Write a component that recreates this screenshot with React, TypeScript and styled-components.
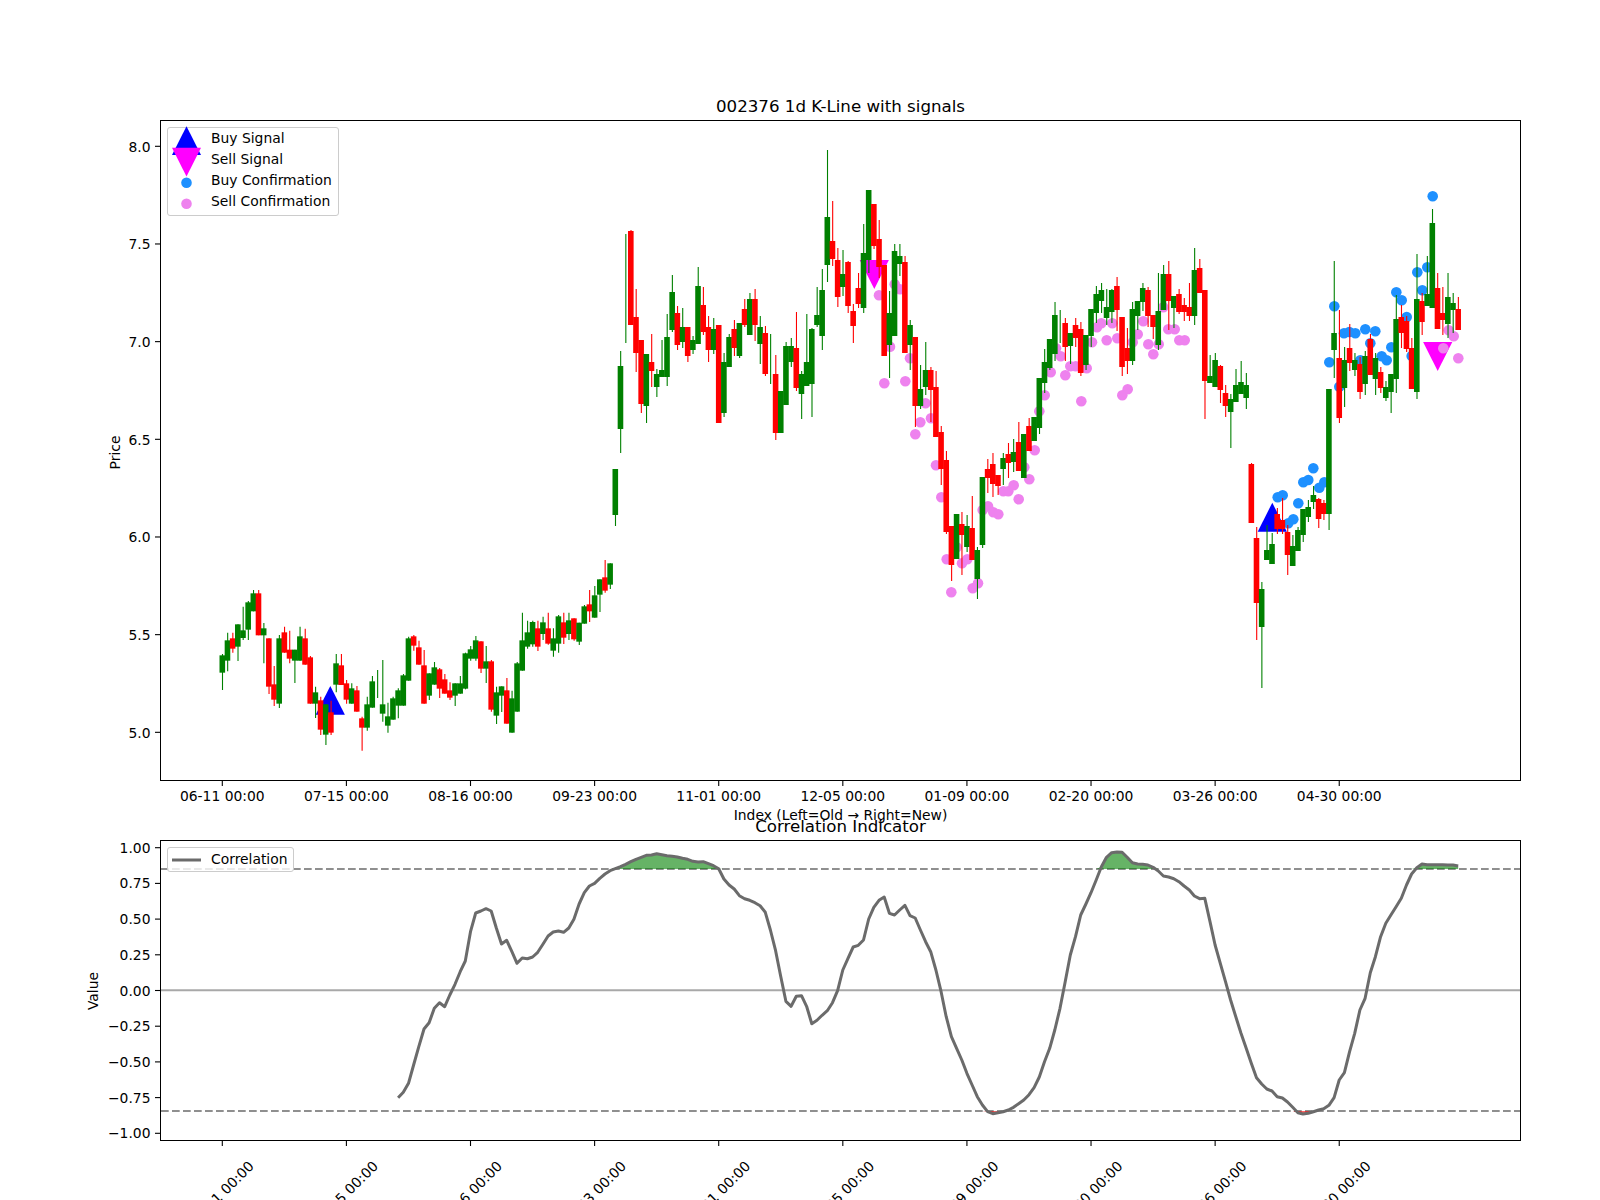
import React from 'react';
import styled, { createGlobalStyle } from 'styled-components';

const GlobalStyle = createGlobalStyle`
	html, body {
		margin: 0;
		background: #fff;
	}
`;

const Figure = styled.div`
	box-sizing: border-box;
	width: 1600px;
	height: 1200px;
	padding: 97px 79px 0 160px;
	overflow: hidden;
	display: flex;
	flex-direction: column;
	background: #fff;
	color: #000;
	font-family: 'DejaVu Sans', sans-serif;
`;
const PlotTitle = styled.div<{ $overlap?: number }>`
	height: 20px;
	line-height: 20px;
	margin-top: ${(props) => (props.$overlap ? `-${props.$overlap}px` : '0')};
	margin-bottom: 3px;
	font-size: 16.67px;
	text-align: center;
`;
const XLabel = styled.div`
	height: 16px;
	line-height: 16px;
	margin-top: 26px;
	font-size: 13.89px;
	text-align: center;
`;
const Axes = styled.div<{ $height: number }>`
	box-sizing: border-box;
	position: relative;
	flex: none;
	width: 1361px;
	height: ${(props) => props.$height}px;
	border: 1px solid #000;
`;
const Plot = styled.svg`
	display: block;
	width: 100%;
	height: 100%;
	overflow: visible;
`;
const Legend = styled.div<{ $width: number; $padding: string }>`
	box-sizing: border-box;
	position: absolute;
	left: 6px;
	top: 6px;
	width: ${(props) => props.$width}px;
	padding: ${(props) => props.$padding};
	display: flex;
	flex-direction: column;
	background: rgba(255, 255, 255, 0.8);
	border: 1px solid #ccc;
	border-radius: 3px;
`;
const LegendRow = styled.div`
	height: 21px;
	display: flex;
	align-items: center;
	gap: 10px;
	font-size: 13.89px;
	white-space: nowrap;
`;
const LegendText = styled.span`
	margin-top: -2px;
`;
const LegendGlyph = styled.svg`
	flex: none;
	width: 29px;
	height: 21px;
	overflow: visible;
`;
const TickLabel = styled.text<{ $anchor?: string }>`
	font-size: 13.89px;
	text-anchor: ${(props) => props.$anchor || 'middle'};
	fill: #000;
`;
const AxisName = styled.text`
	font-size: 13.89px;
	text-anchor: middle;
	fill: #000;
`;

const G = 'green';
const R = 'red';
type Bar = (string | number)[];

// first 76 bars were read off the 3x crop, so they go through a conversion
const early: Bar[] = ([
	[G, 466, 518, 462, 570], [G, 421, 482, 398, 514], [R, 415, 446, 398, 458], [G, 373, 440, 373, 483],
	[G, 391, 414, 320, 420], [G, 307, 389, 303, 420], [G, 280, 334, 270, 334], [R, 280, 406, 270, 406],
	[G, 385, 406, 369, 490], [R, 415, 560, 415, 582], [R, 553, 599, 498, 618], [G, 415, 611, 405, 624],
	[R, 397, 458, 380, 458], [R, 449, 476, 392, 490], [G, 449, 482, 449, 549], [G, 409, 482, 380, 482],
	[R, 415, 494, 386, 494], [R, 472, 611, 468, 611], [G, 577, 611, 560, 654], [R, 601, 689, 590, 705],
	[G, 613, 704, 613, 735], [R, 637, 698, 602, 705], [G, 490, 554, 462, 577], [R, 496, 555, 462, 555],
	[R, 550, 599, 540, 611], [G, 565, 611, 550, 611], [R, 571, 635, 558, 635], [R, 655, 683, 650, 752],
	[G, 613, 683, 590, 692], [G, 544, 623, 528, 623], [G, 590, 590, 510, 594], [G, 613, 641, 480, 665],
	[G, 649, 677, 608, 698], [G, 595, 659, 590, 659], [G, 571, 617, 565, 655], [G, 526, 617, 522, 617],
	[G, 415, 542, 410, 542], [R, 409, 437, 405, 452], [R, 442, 494, 422, 494], [R, 496, 611, 450, 611],
	[G, 520, 587, 520, 600], [G, 502, 554, 486, 554], [R, 508, 566, 504, 594], [R, 538, 581, 522, 581],
	[R, 571, 593, 547, 600], [G, 550, 587, 550, 618], [G, 550, 581, 528, 581], [G, 460, 566, 458, 568],
	[G, 448, 476, 438, 482], [G, 421, 476, 408, 482], [R, 424, 506, 424, 519], [G, 484, 506, 438, 549],
	[R, 484, 629, 480, 635], [G, 577, 647, 560, 672], [G, 559, 587, 559, 636], [R, 571, 671, 534, 671],
	[G, 595, 698, 572, 698], [G, 490, 635, 486, 635], [G, 421, 512, 338, 512], [G, 397, 440, 362, 446],
	[G, 366, 433, 362, 440], [R, 385, 440, 362, 453], [G, 367, 402, 350, 420], [R, 385, 431, 338, 434],
	[G, 415, 452, 385, 470], [G, 349, 431, 345, 458], [R, 367, 413, 338, 432], [G, 361, 402, 338, 420],
	[R, 355, 418, 355, 422], [G, 368, 425, 368, 435], [G, 319, 371, 315, 371], [R, 313, 334, 270, 366],
	[G, 286, 353, 258, 353], [G, 238, 284, 238, 336], [R, 232, 272, 180, 278], [G, 190, 254, 190, 267],
] as Bar[]).map(([c, a, b, d, e]) => [c, 500 + (a as number) / 3, 500 + (b as number) / 3, 500 + (d as number) / 3, 500 + (e as number) / 3]);

const late: Bar[] = [
	[G, 469, 515, 469, 526], [G, 366, 429, 351, 453], [G, 300, 300, 234, 343], [R, 231, 325, 230, 325],
	[R, 317, 353, 289, 372], [R, 340, 404, 340, 413], [G, 354, 406, 354, 423], [R, 362, 371, 334, 387],
	[G, 374, 387, 369, 397], [G, 370, 377, 340, 377], [G, 337, 377, 314, 386], [G, 292, 330, 275, 332],
	[R, 313, 345, 306, 350], [G, 327, 342, 308, 348], [R, 327, 356, 327, 362], [G, 340, 350, 336, 354],
	[G, 286, 344, 267, 344], [R, 305, 332, 287, 335], [R, 327, 350, 316, 362], [G, 329, 350, 318, 354],
	[R, 325, 423, 325, 423], [G, 362, 413, 353, 417], [G, 337, 367, 334, 367], [R, 329, 348, 320, 356],
	[G, 323, 356, 323, 358], [R, 309, 325, 299, 327], [G, 299, 335, 293, 335], [R, 299, 325, 289, 341],
	[G, 327, 344, 316, 364], [R, 333, 374, 326, 376], [G, 350, 350, 334, 384], [R, 374, 433, 355, 440],
	[G, 391, 433, 391, 433], [G, 346, 405, 342, 405], [G, 346, 362, 338, 367], [R, 348, 388, 312, 391],
	[G, 374, 394, 371, 419], [G, 362, 386, 314, 386], [G, 329, 384, 328, 417], [G, 315, 325, 287, 327],
	[G, 290, 336, 269, 350], [G, 217, 265, 150, 282], [R, 241, 259, 201, 266], [R, 260, 297, 248, 307],
	[G, 274, 287, 250, 296], [R, 262, 306, 261, 313], [R, 311, 326, 304, 343], [R, 288, 304, 273, 308],
	[G, 253, 308, 224, 313], [G, 190, 260, 190, 273], [R, 204, 246, 204, 249], [R, 239, 267, 220, 278],
	[R, 265, 356, 265, 356], [G, 313, 345, 291, 378], [G, 251, 336, 244, 336], [G, 256, 264, 244, 276],
	[R, 262, 353, 256, 353], [G, 325, 345, 320, 370], [R, 337, 406, 337, 427], [G, 389, 406, 365, 409],
	[G, 370, 387, 342, 395], [R, 370, 390, 367, 422], [R, 387, 437, 371, 437], [R, 432, 469, 426, 485],
	[R, 460, 532, 451, 534], [R, 526, 565, 526, 581], [G, 514, 559, 514, 559], [R, 524, 535, 512, 575],
	[G, 526, 547, 515, 552], [R, 528, 560, 496, 560], [G, 550, 579, 547, 599], [G, 477, 545, 477, 548],
	[R, 469, 478, 459, 493], [R, 464, 484, 453, 497], [R, 475, 486, 475, 495], [G, 458, 469, 453, 485],
	[R, 454, 463, 443, 478], [G, 452, 462, 439, 472], [R, 442, 471, 422, 471], [G, 434, 478, 434, 478],
	[R, 426, 451, 418, 451], [G, 417, 441, 417, 441], [G, 378, 428, 378, 434], [G, 362, 383, 349, 393],
	[G, 339, 368, 339, 370], [G, 315, 354, 302, 361], [G, 325, 325, 310, 343], [R, 323, 347, 318, 361],
	[G, 333, 346, 333, 364], [R, 325, 338, 318, 347], [R, 329, 373, 322, 376], [G, 335, 365, 335, 370],
	[G, 309, 336, 309, 347], [G, 294, 313, 286, 323], [G, 290, 301, 283, 313], [G, 307, 318, 289, 325],
	[G, 290, 312, 289, 323], [R, 286, 310, 277, 331], [R, 317, 367, 317, 376], [R, 348, 361, 328, 374],
	[G, 309, 361, 302, 365], [G, 301, 316, 301, 330], [G, 288, 302, 283, 311], [R, 290, 316, 287, 327],
	[R, 315, 327, 315, 339], [G, 311, 345, 273, 350], [G, 274, 310, 265, 310], [R, 274, 301, 261, 330],
	[G, 296, 308, 296, 328], [R, 294, 312, 289, 314], [R, 305, 312, 298, 321], [R, 307, 316, 283, 321],
	[G, 270, 316, 248, 325], [R, 268, 293, 259, 293], [R, 290, 381, 290, 419], [G, 376, 383, 355, 383],
	[G, 360, 387, 353, 387], [R, 366, 390, 365, 403], [R, 393, 406, 385, 417], [G, 399, 412, 394, 448],
	[G, 385, 402, 369, 402], [G, 382, 394, 361, 394], [G, 385, 398, 373, 409], [R, 464, 523, 463, 523],
	[R, 538, 603, 527, 640], [G, 589, 627, 582, 688], [G, 550, 560, 525, 560], [G, 544, 564, 533, 564],
	[R, 514, 529, 508, 534], [R, 520, 529, 498, 534], [R, 532, 555, 525, 575], [G, 546, 566, 535, 566],
	[G, 530, 551, 527, 551], [G, 509, 535, 509, 542], [G, 507, 517, 500, 522], [G, 495, 502, 486, 509],
	[R, 499, 519, 498, 528], [R, 503, 514, 500, 520], [G, 389, 514, 389, 530], [G, 333, 350, 261, 378],
	[R, 358, 418, 310, 423], [G, 360, 388, 347, 407], [R, 348, 363, 324, 371], [G, 360, 370, 353, 376],
	[R, 364, 392, 357, 399], [G, 356, 384, 351, 395], [R, 339, 375, 334, 375], [G, 358, 379, 353, 395],
	[R, 372, 388, 367, 393], [G, 387, 398, 381, 401], [G, 374, 392, 374, 413], [G, 319, 379, 295, 393],
	[R, 317, 333, 305, 348], [R, 321, 349, 316, 352], [R, 348, 389, 338, 389], [G, 299, 392, 254, 399],
	[R, 301, 322, 293, 335], [G, 294, 306, 256, 306], [G, 223, 308, 209, 308], [R, 288, 329, 273, 329],
	[R, 313, 320, 287, 335], [G, 297, 324, 273, 338], [G, 303, 310, 293, 333], [R, 309, 330, 297, 330],
];

const bars = [...early, ...late];
const barX = (i: number) => 222.3 + 5.171 * i;

const buyDots = [
	[1432.7, 196.3], [1334.3, 306.3], [1344, 333.3], [1349.3, 332], [1355.3, 333.3], [1365.3, 329.3],
	[1375.3, 331.3], [1370.3, 343.3], [1329.3, 362.3], [1339.3, 386.7], [1360.3, 360.3], [1381.7, 356.3],
	[1386.7, 360.3], [1391.3, 347.3], [1396.3, 292.3], [1401.7, 300.3], [1406.7, 317], [1411.7, 356],
	[1417.3, 272.3], [1422.3, 290.3], [1427.3, 267.3], [1313.3, 468.3], [1277.7, 497.3], [1282.7, 495.3],
	[1298.3, 503.3], [1303.3, 482.3], [1308.3, 480], [1319.3, 487.7], [1324.3, 482.3], [1288.3, 523.3],
	[1293.3, 519.3],
];
const sellDots = [
	[879, 295.3], [894.7, 284.3], [900, 289.3], [890, 346.7], [910, 358.3], [884.3, 383.3], [905.3, 381.3],
	[925.5, 403.3], [920.3, 422.3], [931, 418.3], [915.3, 434.3], [936, 465.3], [941.3, 497.3], [946.7, 559.3],
	[956.7, 547.3], [951.3, 592.3], [962, 563.3], [967.3, 559.3], [972.7, 588.3], [978, 583.3], [982.7, 510],
	[988, 506.3], [993.3, 512.3], [998.3, 514.3], [1003.3, 491.3], [1008.3, 491.3], [1013.7, 485.3],
	[1018.7, 499.3], [1024.3, 467.3], [1029.3, 479.3], [1034.7, 450.3], [1039.3, 411.3], [1044.7, 395.3],
	[1050.7, 372.3], [1056, 348.3], [1060.7, 356.3], [1065.3, 375.3], [1070.3, 366.3], [1075.7, 366.3],
	[1081.3, 401.3], [1086.7, 368.3], [1092, 342.3], [1097, 327.3], [1101.3, 323.3], [1106.7, 340.3],
	[1112.3, 323.3], [1117.3, 338.3], [1122.3, 395.3], [1127.7, 389.3], [1132.7, 342.3], [1137.7, 334.3],
	[1143.3, 321.3], [1148.3, 344.3], [1153.3, 354.3], [1158.7, 344.3], [1163.3, 307.3], [1168.3, 329.3],
	[1174.7, 329.3], [1179.3, 340.3], [1184.7, 340.3], [1448.7, 330.3], [1453.7, 336.3], [1443.3, 348.3],
	[1458.3, 358.3],
];

const corr = [
	893, 877, 850, 795, 740, 687, 668, 625, 608, 620, 585, 553, 515, 483, 395, 339, 333, 326, 333, 385,
	432, 421, 455, 490, 474, 476, 471, 457, 433, 408, 396, 393, 397, 384, 358, 312, 278, 258, 250, 235,
	222, 212, 206, 200, 193, 185, 178, 172, 166, 165, 161, 164, 167, 169, 171, 175, 178, 184, 186, 185,
	191, 197, 206, 237, 255, 267, 287, 296, 301, 308, 317, 337, 390, 452, 530, 604, 619, 589, 587, 619,
	671, 661, 646, 632, 608, 572, 510, 475, 441, 436, 420, 357, 322, 301, 291, 340, 345, 330, 316, 347,
	354, 390, 425, 455, 510, 575, 650, 710, 745, 780, 820, 855, 890, 915, 935, 941, 938, 935, 930, 922,
	911, 900, 884, 863, 831, 785, 745, 690, 625, 545, 465, 410, 345, 312, 278, 240, 200, 172, 158, 156,
	157, 172, 188, 192, 193, 195, 202, 213, 228, 231, 236, 245, 258, 270, 288, 296, 295, 365, 435, 490,
	545, 600, 650, 700, 745, 790, 833, 852, 867, 873, 890, 894, 906, 922, 938, 942, 940, 935, 930, 926,
	916, 893, 840, 818, 755, 700, 630, 595, 518, 470, 410, 370, 345, 320, 295, 255, 222, 203, 192, 194,
	194, 194, 194, 195, 195, 198,
].map((z) => 800 + z / 3);

const corrX = (j: number) => barX(34 + j);
const UPPER = 868.9;
const LOWER = 1111;
const ZERO = 990.3;
const priceTicks = ['8.0', '7.5', '7.0', '6.5', '6.0', '5.5', '5.0'];
const valueTicks = [1, 0.75, 0.5, 0.25, 0, -0.25, -0.5, -0.75, -1];
const dates = ['06-11', '07-15', '08-16', '09-23', '11-01', '12-05', '01-09', '02-20', '03-26', '04-30'];

const linePoints = corr.map((y, j) => `${corrX(j).toFixed(1)},${y.toFixed(1)}`).join(' ');
const zonePoints = (base: number, clamp: (y: number) => number) =>
	`${corrX(0)},${base} ` +
	corr.map((y, j) => `${corrX(j).toFixed(1)},${clamp(y).toFixed(1)}`).join(' ') +
	` ${corrX(corr.length - 1)},${base}`;

function Triangle(props: { x: number; top: number; bottom: number; up: boolean; color: string }) {
	const { x, top, bottom, up, color } = props;
	const half = 14.6;
	const pts = up
		? `${x},${top} ${x + half},${bottom} ${x - half},${bottom}`
		: `${x - half},${top} ${x + half},${top} ${x},${bottom}`;
	return <polygon points={pts} fill={color} />;
}

function Candles() {
	return (
		<>
			{bars.map((b, i) => {
				const [c, top, bottom, wTop, wBottom] = b as [string, number, number, number, number];
				const x = barX(i);
				const color = c === G ? '#008000' : '#ff0000';
				return (
					<g key={i}>
						<line x1={x + 0.2} x2={x + 0.2} y1={wTop} y2={wBottom} stroke={color} strokeWidth={1.1} />
						{bottom > top ? <rect x={x - 2.8} y={top} width={5.6} height={bottom - top} fill={color} /> : null}
					</g>
				);
			})}
		</>
	);
}

function PricePanel() {
	return (
		<Axes $height={661}>
			<Plot viewBox="161 121 1359 659">
				<Triangle x={330.3} top={686} bottom={714.7} up color="#0000ff" />
				<Triangle x={1272.3} top={502.7} bottom={531.7} up color="#0000ff" />
				<Triangle x={874.3} top={260} bottom={289} up={false} color="#ff00ff" />
				<Triangle x={1437.7} top={342} bottom={371} up={false} color="#ff00ff" />
				{buyDots.map(([x, y], i) => (
					<circle key={i} cx={x} cy={y} r={5.3} fill="#1e90ff" />
				))}
				{sellDots.map(([x, y], i) => (
					<circle key={i} cx={x} cy={y} r={5.3} fill="#ee82ee" />
				))}
				<Candles />
				{priceTicks.map((t, i) => {
					const y = 146.3 + 97.67 * i;
					return (
						<g key={t}>
							<line x1={155} x2={160} y1={y} y2={y} stroke="#000" strokeWidth={1.1} />
							<TickLabel x={150.5} y={y + 5.5} $anchor="end">
								{t}
							</TickLabel>
						</g>
					);
				})}
				{dates.map((d, i) => {
					const x = barX(24 * i);
					return (
						<g key={d}>
							<line x1={x} x2={x} y1={781} y2={786} stroke="#000" strokeWidth={1.1} />
							<TickLabel x={x} y={801}>
								{d} 00:00
							</TickLabel>
						</g>
					);
				})}
				<AxisName transform="translate(120 452.5) rotate(-90)">Price</AxisName>
			</Plot>
			<Legend $width={172} $padding="0 4px 3px">
				<LegendRow>
					<LegendGlyph viewBox="0 0 29 21">
						<polygon points="14.5,-1.8 29,26.9 0,26.9" fill="#0000ff" />
					</LegendGlyph>
					<LegendText>Buy Signal</LegendText>
				</LegendRow>
				<LegendRow>
					<LegendGlyph viewBox="0 0 29 21">
						<polygon points="0,-1.2 29,-1.2 14.5,27.5" fill="#ff00ff" />
					</LegendGlyph>
					<LegendText>Sell Signal</LegendText>
				</LegendRow>
				<LegendRow>
					<LegendGlyph viewBox="0 0 29 21">
						<circle cx={14.5} cy={12.8} r={5.3} fill="#1e90ff" />
					</LegendGlyph>
					<LegendText>Buy Confirmation</LegendText>
				</LegendRow>
				<LegendRow>
					<LegendGlyph viewBox="0 0 29 21">
						<circle cx={14.5} cy={12.8} r={5.3} fill="#ee82ee" />
					</LegendGlyph>
					<LegendText>Sell Confirmation</LegendText>
				</LegendRow>
			</Legend>
		</Axes>
	);
}

function CorrelationPanel() {
	return (
		<Axes $height={301}>
			<Plot viewBox="161 841 1359 299">
				<line x1={161} x2={1520} y1={ZERO} y2={ZERO} stroke="#a8a8a8" strokeWidth={2} />
				<line x1={161} x2={1520} y1={UPPER} y2={UPPER} stroke="#8f8f8f" strokeWidth={2} strokeDasharray="7.7 3.3" />
				<line x1={161} x2={1520} y1={LOWER} y2={LOWER} stroke="#8f8f8f" strokeWidth={2} strokeDasharray="7.7 3.3" />
				<polygon points={zonePoints(UPPER, (y) => Math.min(y, UPPER))} fill="#008000" fillOpacity={0.6} />
				<polygon points={zonePoints(LOWER, (y) => Math.max(y, LOWER))} fill="#ff0000" fillOpacity={0.6} />
				<polyline points={linePoints} fill="none" stroke="#6b6b6b" strokeWidth={3} strokeLinejoin="round" />
				{valueTicks.map((v) => {
					const y = 990.5 - 142.8 * v;
					return (
						<g key={v}>
							<line x1={155} x2={160} y1={y} y2={y} stroke="#000" strokeWidth={1.1} />
							<TickLabel x={150.5} y={y + 5} $anchor="end">
								{v.toFixed(2).replace('-', '\u2212')}
							</TickLabel>
						</g>
					);
				})}
				{dates.map((d, i) => {
					const x = barX(24 * i);
					return (
						<g key={d}>
							<line x1={x} x2={x} y1={1141} y2={1146} stroke="#000" strokeWidth={1.1} />
							<TickLabel x={x - 1} y={1198.5} transform={`rotate(-45 ${x - 1} 1193.5)`}>
								{d} 00:00
							</TickLabel>
						</g>
					);
				})}
				<AxisName transform="translate(98 991) rotate(-90)">Value</AxisName>
			</Plot>
			<Legend $width={127} $padding="1px 4px 1px">
				<LegendRow>
					<LegendGlyph viewBox="0 0 29 21">
						<line x1={0} x2={29} y1={11} y2={11} stroke="#6b6b6b" strokeWidth={3} />
					</LegendGlyph>
					<LegendText>Correlation</LegendText>
				</LegendRow>
			</Legend>
		</Axes>
	);
}

export default function App() {
	return (
		<Figure>
			<GlobalStyle />
			<PlotTitle>002376 1d K-Line with signals</PlotTitle>
			<PricePanel />
			<XLabel>Index (Left=Old → Right=New)</XLabel>
			<PlotTitle $overlap={6}>Correlation Indicator</PlotTitle>
			<CorrelationPanel />
		</Figure>
	);
}
